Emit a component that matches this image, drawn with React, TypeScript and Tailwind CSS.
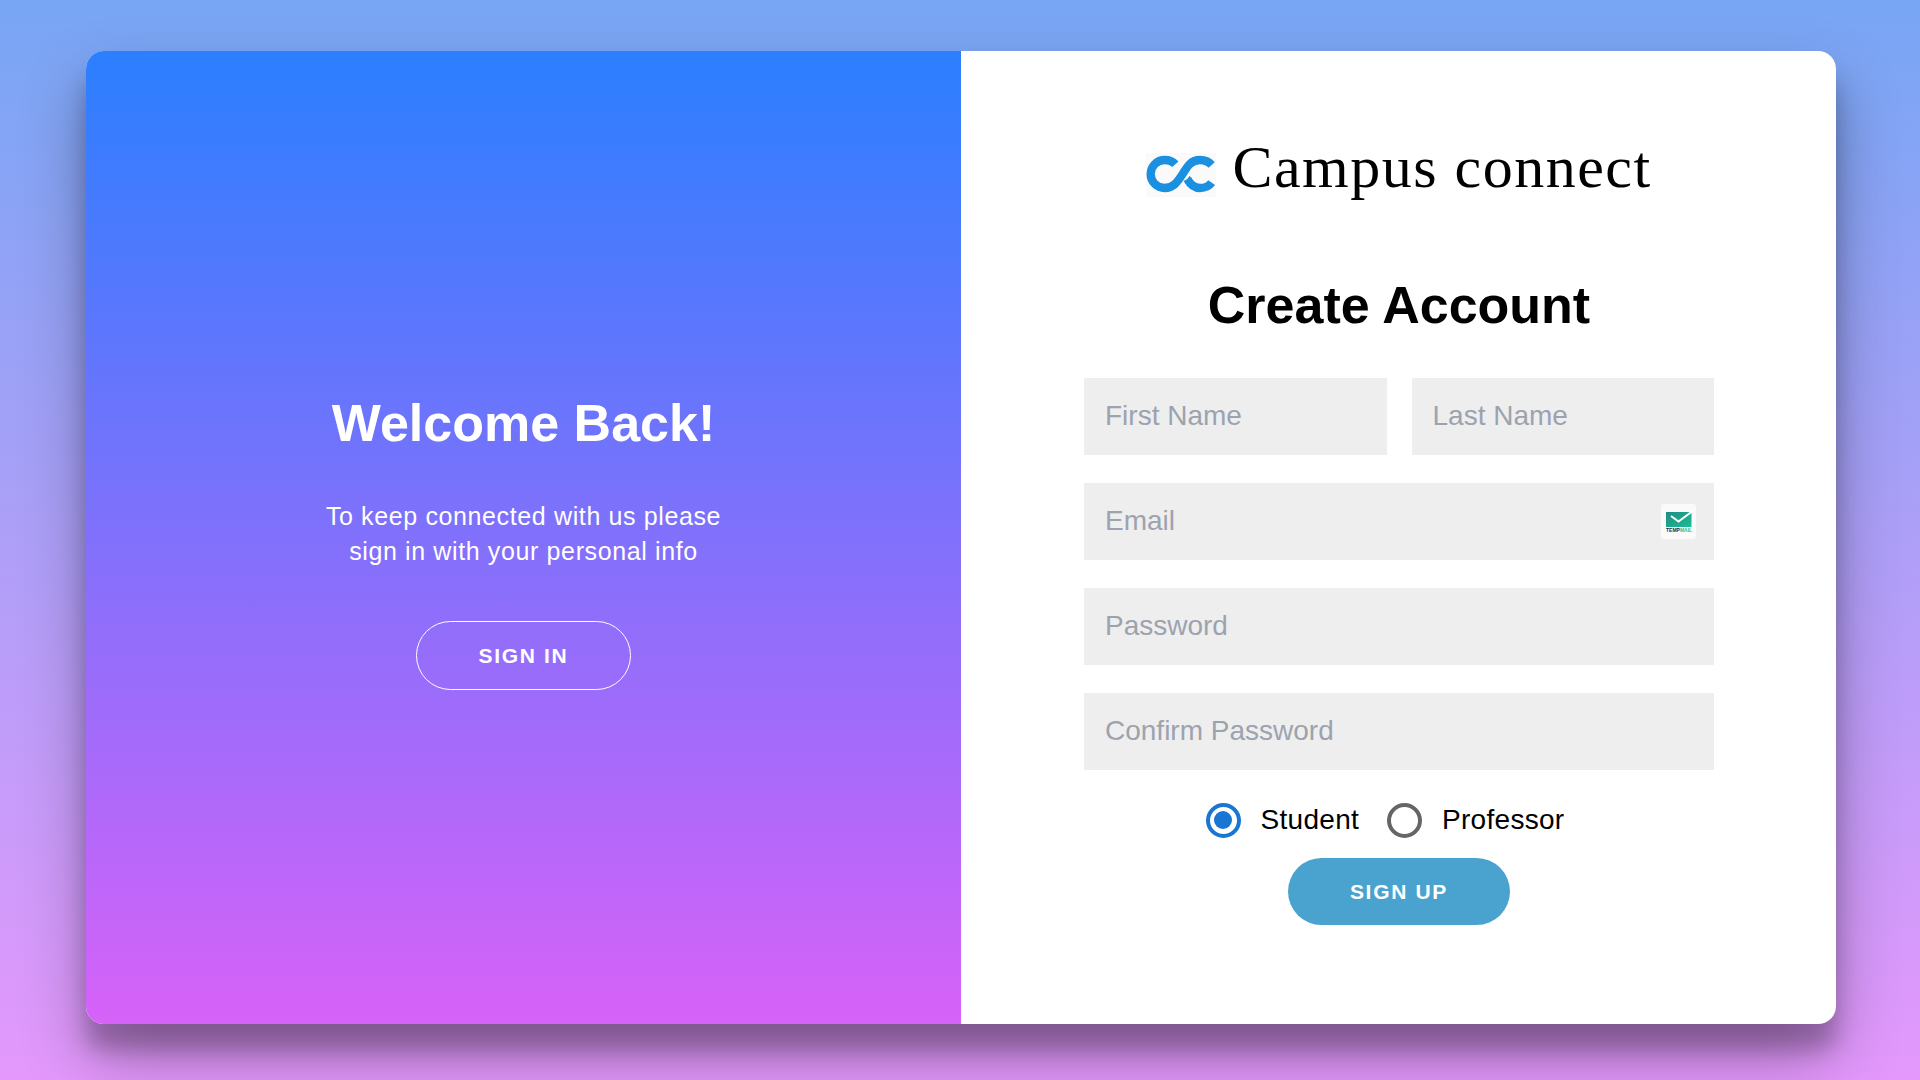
import { useState } from "react";

function CampusLogo() {
  return (
    <svg
      viewBox="0 0 210 132"
      className="h-11 w-[70px] bg-[#fafafa]"
      fill="none"
      stroke="#1b90e0"
      strokeWidth="25"
      aria-hidden="true"
    >
      <path d="M88 34C80 25 69 21 56 21A42 42 0 0 0 56 105C84 105 96 84 110 63C124 40 135 21 162 21C177 21 189 27 197 36" />
      <path d="M124 78C134 97 146 105 162 105C177 105 189 100 197 89" />
      <path d="M131 68L116 89L124 98L140 84Z" fill="#1b90e0" stroke="none" />
    </svg>
  );
}

function TempMailIcon() {
  return (
    <svg viewBox="0 0 35 35" className="size-[35px]" aria-hidden="true">
      <defs>
        <linearGradient id="mail" x1="0" y1="0" x2="1" y2="1">
          <stop offset="0" stopColor="#1d8d83" />
          <stop offset="1" stopColor="#1cbd93" />
        </linearGradient>
      </defs>
      <rect width="35" height="35" rx="3" fill="#fafafa" />
      <path d="M5 8h25.500v15h-25.500z" fill="url(#mail)" />
      <path d="M10 12l7.500 5.500L31 7.500" fill="none" stroke="#fff" strokeWidth="2" />
      <text
        x="5"
        y="28"
        fontSize="5"
        fontWeight="700"
        fontFamily="Liberation Sans, sans-serif"
        fill="#14304a"
      >
        TEMP<tspan fill="#1cbd93">MAIL</tspan>
      </text>
    </svg>
  );
}

const fieldClass =
  "block h-[77px] w-full min-w-0 bg-[#eeeeee] px-[21px] pb-0.5 text-[28px] text-black outline-none placeholder:text-[#9ca3af]";

function Field({ label, type = "text" }: { label: string; type?: string }) {
  return <input type={type} aria-label={label} placeholder={label} className={fieldClass} />;
}

function RoleOption({
  label,
  checked,
  onSelect,
}: {
  label: string;
  checked: boolean;
  onSelect: () => void;
}) {
  return (
    <label className="mr-7 flex items-center gap-5 text-[28px] leading-10 tracking-[0.01em]">
      <input
        type="radio"
        name="role"
        checked={checked}
        onChange={onSelect}
        className="grid size-[35px] appearance-none place-items-center rounded-full border-4 border-[#666666] before:size-[18px] before:rounded-full checked:border-[#1976d2] checked:before:bg-[#1976d2]"
      />
      {label}
    </label>
  );
}

export default function App() {
  const [role, setRole] = useState("Student");

  return (
    <main className="grid min-h-screen bg-linear-to-b/srgb from-[#77a6f4] to-[#e498fc] pt-[51px] pr-[84px] pb-14 pl-[86px] font-['Liberation_Sans',Arial,sans-serif]">
      <div className="grid grid-cols-2 overflow-hidden rounded-[18px] bg-white shadow-[0_33px_66px_rgba(0,0,0,0.3),0_26px_21px_rgba(0,0,0,0.22)]">
        <section className="flex flex-col items-center justify-center bg-linear-to-b/srgb from-[#2b7fff] to-[#d762f8] px-[70px] text-center text-white">
          <h1 className="text-[52px] leading-[76px] font-bold">Welcome Back!</h1>
          <p className="mt-[38px] text-[25px] leading-[35px] tracking-wide">
            To keep connected with us please
            <br />
            sign in with your personal info
          </p>
          <button
            type="button"
            className="mt-[52px] h-[69px] rounded-full border border-white px-[62px] text-[21px] font-bold tracking-[0.08em] uppercase"
          >
            Sign In
          </button>
        </section>

        <form
          className="flex flex-col items-center justify-center pr-[122px] pb-[13px] pl-[123px]"
          onSubmit={(e) => e.preventDefault()}
        >
          <div className="flex items-end gap-4">
            <CampusLogo />
            <span className="font-['Liberation_Serif','Times_New_Roman',serif] text-[60px] leading-[60px] tracking-wide">
              Campus connect
            </span>
          </div>
          <h1 className="mt-[78px] text-[52px] leading-[60px] font-bold">Create Account</h1>

          <div className="mt-[43px] flex w-full flex-col gap-7">
            <div className="grid grid-cols-2 gap-[25px]">
              <Field label="First Name" />
              <Field label="Last Name" />
            </div>
            <div className="relative">
              <Field label="Email" type="email" />
              <div className="absolute top-[21px] right-[18px]">
                <TempMailIcon />
              </div>
            </div>
            <Field label="Password" type="password" />
            <Field label="Confirm Password" type="password" />
          </div>

          <div className="mt-[15px] flex h-[70px] items-center">
            <RoleOption
              label="Student"
              checked={role === "Student"}
              onSelect={() => setRole("Student")}
            />
            <RoleOption
              label="Professor"
              checked={role === "Professor"}
              onSelect={() => setRole("Professor")}
            />
          </div>

          <button
            type="submit"
            className="mt-[3px] h-[67px] rounded-full bg-[#4aa3cf] px-[62px] text-[21px] font-bold tracking-[0.08em] text-white uppercase"
          >
            Sign Up
          </button>
        </form>
      </div>
    </main>
  );
}
